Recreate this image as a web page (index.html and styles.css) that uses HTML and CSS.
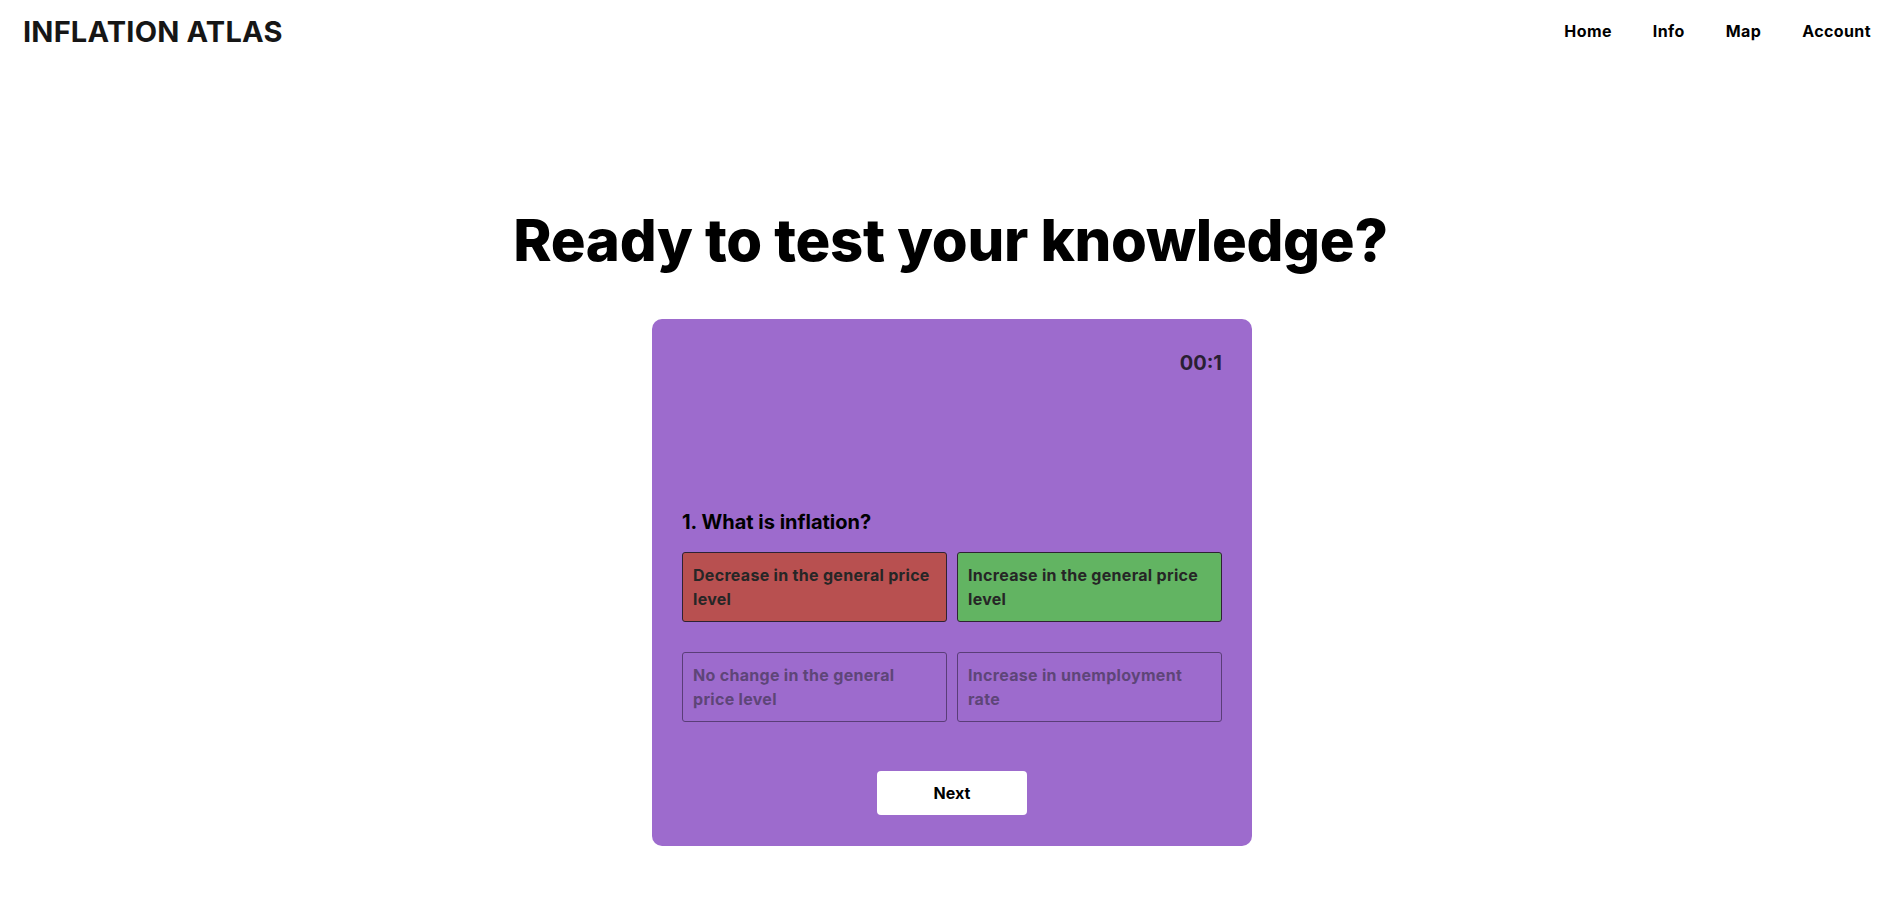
FILE: index.html
```html
<!DOCTYPE html>
<html lang="en">
<head>
<meta charset="utf-8">
<title>Inflation Atlas - Quiz</title>
<link rel="stylesheet" href="styles.css">
</head>
<body>
<header class="topbar">
  <div class="logo">INFLATION ATLAS</div>
  <nav class="nav">
    <a href="#">Home</a>
    <a href="#">Info</a>
    <a href="#">Map</a>
    <a href="#">Account</a>
  </nav>
</header>
<main class="main">
  <h1 class="title">Ready to test your knowledge?</h1>
  <section class="card">
    <div class="timer">00:1</div>
    <h2 class="question">1. What is inflation?</h2>
    <div class="options">
      <button class="option wrong">Decrease in the general price level</button>
      <button class="option right">Increase in the general price level</button>
      <button class="option muted">No change in the general price level</button>
      <button class="option muted">Increase in unemployment rate</button>
    </div>
    <div class="actions">
      <button class="next">Next</button>
    </div>
  </section>
</main>
</body>
</html>
```
FILE: styles.css
```css
* { box-sizing: border-box; }
html, body { margin: 0; padding: 0; background: #ffffff; }
body {
  font-family: "Inter", "Liberation Sans", sans-serif;
  color: #000;
}
.topbar {
  display: flex;
  justify-content: space-between;
  align-items: center;
  height: 62px;
  padding: 0 30px 0 23px;
}
.logo {
  font-size: 29px;
  font-weight: 700;
  color: #161616;
  letter-spacing: 0.2px;
}
.nav {
  display: flex;
  gap: 41px;
}
.nav a {
  text-decoration: none;
  color: #000;
  font-size: 16px;
  font-weight: 700;
  letter-spacing: 0.4px;
}
.main {
  display: flex;
  flex-direction: column;
  align-items: center;
}
.title {
  margin: 138px 0 0;
  font-size: 58px;
  line-height: 80px;
  font-weight: 800;
  letter-spacing: -0.3px;
}
.card {
  margin-top: 39px;
  margin-left: 3px;
  width: 600px;
  background: #9d6bcd;
  border-radius: 10px;
  padding: 29px 30px 31px;
}
.timer {
  text-align: right;
  font-size: 20px;
  line-height: 30px;
  font-weight: 700;
  color: #2a1f33;
}
.question {
  margin: 129px 0 0;
  font-size: 20px;
  line-height: 30px;
  font-weight: 700;
  color: #000;
}
.options {
  margin-top: 15px;
  display: grid;
  grid-template-columns: 1fr 1fr;
  column-gap: 10px;
  row-gap: 30px;
}
.option {
  font-family: inherit;
  text-align: left;
  font-size: 16px;
  line-height: 24px;
  font-weight: 700;
  padding: 10px;
  height: 70px;
  border-radius: 3px;
  border: 1px solid #2e2233;
  color: #262626;
  background: transparent;
  letter-spacing: 0.3px;
}
.option.wrong { background: #b85050; }
.option.right { background: #62b462; }
.option.muted {
  color: #5e4578;
  border-color: #5a3d78;
}
.actions {
  display: flex;
  justify-content: center;
  margin-top: 49px;
}
.next {
  width: 150px;
  height: 44px;
  border: none;
  border-radius: 4px;
  background: #fff;
  font-family: inherit;
  font-size: 16px;
  font-weight: 700;
  color: #000;
}
```
